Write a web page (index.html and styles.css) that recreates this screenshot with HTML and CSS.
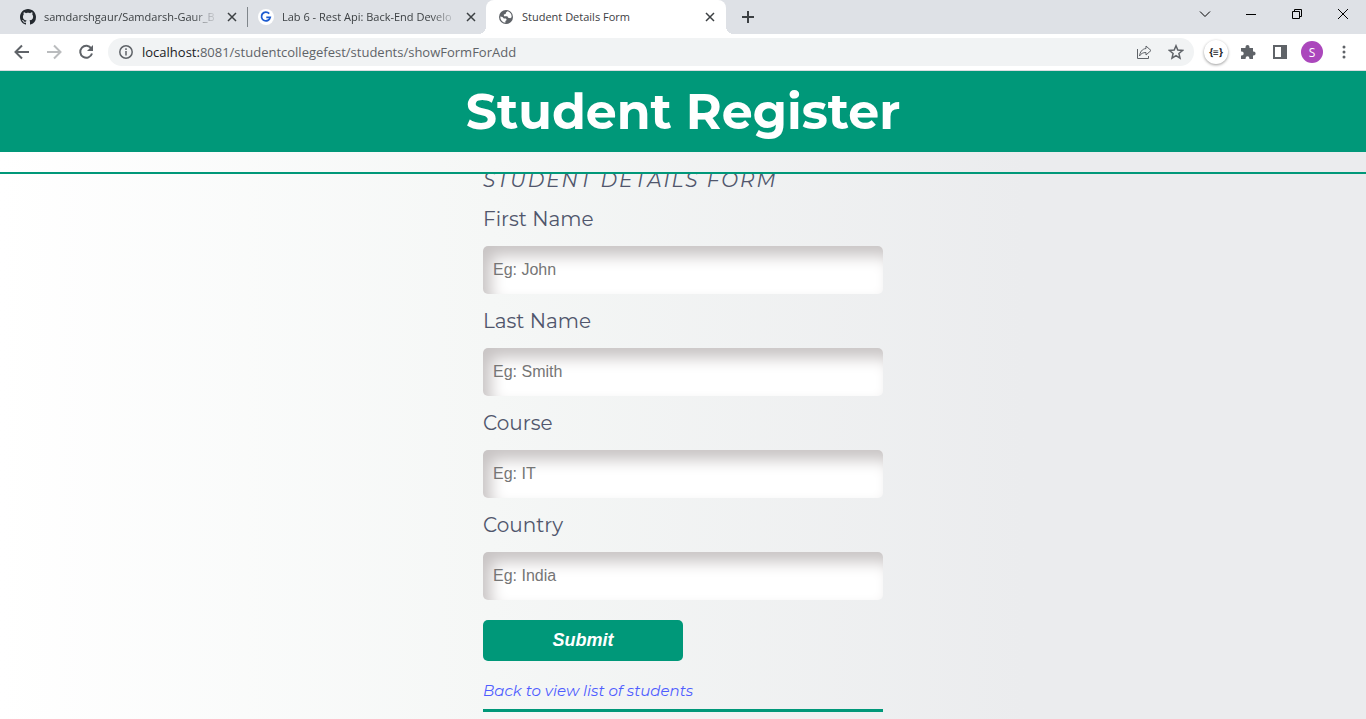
FILE: index.html
```html
<!DOCTYPE html>
<html lang="en">
<head>
<meta charset="utf-8">
<title>Student Details Form</title>
<link rel="stylesheet" href="styles.css">
</head>
<body>
<div class="browser">
  <div class="tabstrip">
    <div class="tab">
      <svg class="favicon" viewBox="0 0 16 16"><path fill="#24292f" d="M8 0C3.58 0 0 3.58 0 8c0 3.54 2.29 6.53 5.47 7.59.4.07.55-.17.55-.38 0-.19-.01-.82-.01-1.49-2.01.37-2.53-.49-2.69-.94-.09-.23-.48-.94-.82-1.13-.28-.15-.68-.52-.01-.53.63-.01 1.08.58 1.23.82.72 1.21 1.87.87 2.33.66.07-.52.28-.87.51-1.07-1.78-.2-3.64-.89-3.64-3.95 0-.87.31-1.59.82-2.15-.08-.2-.36-1.02.08-2.12 0 0 .67-.21 2.2.82.64-.18 1.32-.27 2-.27s1.36.09 2 .27c1.53-1.04 2.2-.82 2.2-.82.44 1.1.16 1.92.08 2.12.51.56.82 1.27.82 2.15 0 3.07-1.87 3.75-3.65 3.95.29.25.54.73.54 1.48 0 1.07-.01 1.93-.01 2.2 0 .21.15.46.55.38A8.01 8.01 0 0 0 16 8c0-4.42-3.58-8-8-8z"/></svg>
      <span class="tab-title fade">samdarshgaur/Samdarsh-Gaur_B</span>
      <button class="tab-close" aria-label="Close tab"><svg viewBox="0 0 10 10"><path d="M1 1l8 8M9 1l-8 8"/></svg></button>
    </div>
    <div class="tab divided">
      <svg class="favicon" viewBox="0 0 16 16"><circle cx="8" cy="8" r="8" fill="#fff"/><path d="M11.2 4.6A4.4 4.4 0 1 0 12.2 8.400H8.300" fill="none" stroke="#1d5bd0" stroke-width="1.800"/></svg>
      <span class="tab-title fade">Lab 6 - Rest Api: Back-End Develo</span>
      <button class="tab-close" aria-label="Close tab"><svg viewBox="0 0 10 10"><path d="M1 1l8 8M9 1l-8 8"/></svg></button>
    </div>
    <div class="tab active">
      <svg class="favicon" viewBox="0 0 16 16"><circle cx="8" cy="8" r="7" fill="#5f6368"/><path fill="#fff" d="M9.500 2.300L8 3.500 7.600 5 5.800 5.600 6 7.200H9.300l.9 1.600 2.100.4 1.300-1A5.700 5.700 0 0 0 9.500 2.300zM2.300 7.600A5.700 5.700 0 0 0 7.400 13.700V12l1.300-.9L8 9.600 5.800 9.400 4.500 8z"/></svg>
      <span class="tab-title">Student Details Form</span>
      <button class="tab-close" aria-label="Close tab"><svg viewBox="0 0 10 10"><path d="M1 1l8 8M9 1l-8 8"/></svg></button>
    </div>
    <button class="new-tab" aria-label="New tab"><svg viewBox="0 0 12 12"><path d="M6 0v12M0 6h12"/></svg></button>
    <div class="window-controls">
      <button aria-label="Search tabs"><svg viewBox="0 0 12 12"><path d="M1 3.500l5 5 5-5"/></svg></button>
      <button aria-label="Minimize"><svg viewBox="0 0 12 12"><path d="M1 6.500h10"/></svg></button>
      <button aria-label="Restore"><svg viewBox="0 0 12 12"><path d="M1.500 3.500h7v7h-7zM3.500 3.500v-2h7v7h-2"/></svg></button>
      <button aria-label="Close window"><svg viewBox="0 0 12 12"><path d="M1 1l10 10M11 1L1 11"/></svg></button>
    </div>
  </div>
  <div class="toolbar">
    <button class="tool" aria-label="Back"><svg viewBox="0 0 16 16"><path d="M15 8H2M8 1.500L1.500 8 8 14.500"/></svg></button>
    <button class="tool disabled" aria-label="Forward"><svg viewBox="0 0 16 16"><path d="M1 8h13M8 1.500L14.500 8 8 14.500"/></svg></button>
    <button class="tool" aria-label="Reload"><svg viewBox="0 0 16 16"><path d="M13.300 4.500A6 6 0 1 0 14 9.500"/><path class="solid" d="M15 1v6H9z"/></svg></button>
    <div class="omnibox">
      <svg class="glyph" viewBox="0 0 16 16"><circle cx="8" cy="8" r="6.200"/><path d="M8 7v4.500M8 4.300v1.700"/></svg>
      <div class="url"><span class="host">localhost:</span>8081/studentcollegefest/students/showFormForAdd</div>
      <button class="tool thin" aria-label="Share"><svg viewBox="0 0 16 16"><path d="M1.500 5v9.500h11V12M10 2l5 4.500-5 4.500V8.500C7 8.500 5 9.500 3.500 12 4 8 6 5 10 4.500z"/></svg></button>
      <button class="tool" aria-label="Bookmark"><svg viewBox="0 0 16 16"><path class="star" d="M8 1.800l1.800 4.300 4.700.4-3.600 3 1.100 4.700-4-2.500-4 2.500 1.100-4.700-3.600-3 4.700-.4z"/></svg></button>
    </div>
    <button class="extension" aria-label="JSON viewer">{≡}</button>
    <button class="tool" aria-label="Extensions"><svg viewBox="0 0 16 16"><path class="solid" d="M2 4h3.500V3a2 2 0 0 1 4 0v1H13v3.500h.6a2 2 0 0 1 0 4H13V15H9.400v-.8a1.900 1.900 0 0 0-3.800 0v.8H1v-3.600h.8a1.900 1.900 0 0 0 0-3.800H1V4z"/></svg></button>
    <button class="tool" aria-label="Side panel"><svg viewBox="0 0 16 16"><path class="solid" fill-rule="evenodd" d="M1 1h14v14H1zM3 3v10h6V3z"/></svg></button>
    <button class="avatar" aria-label="Profile">S</button>
    <button class="tool" aria-label="Menu"><svg viewBox="0 0 16 16"><g class="solid"><circle cx="8" cy="3" r="1.500"/><circle cx="8" cy="8" r="1.500"/><circle cx="8" cy="13" r="1.500"/></g></svg></button>
  </div>
</div>
<div class="page">
  <header class="banner"><h1>Student Register</h1></header>
  <hr class="rule">
  <main class="content">
    <h2 class="form-title">Student Details Form</h2>
    <form class="form">
      <label for="first">First Name</label>
      <input id="first" type="text" placeholder="Eg: John">
      <label for="last">Last Name</label>
      <input id="last" type="text" placeholder="Eg: Smith">
      <label for="course">Course</label>
      <input id="course" type="text" placeholder="Eg: IT">
      <label for="country">Country</label>
      <input id="country" type="text" placeholder="Eg: India">
      <button class="submit" type="button">Submit</button>
    </form>
    <a class="back" href="#">Back to view list of students</a>
  </main>
</div>
</body>
</html>
```
FILE: styles.css
```css
* { box-sizing: border-box; }
body {
  margin: 0;
  min-height: 100vh;
  display: flex;
  flex-direction: column;
  font-family: Montserrat, Inter, sans-serif;
  color: #50566c;
}
button { border: 0; padding: 0; background: none; font: inherit; color: inherit; }
svg { display: block; fill: none; stroke: currentColor; }

.browser { font-family: "Segoe UI", "Open Sans", sans-serif; color: #3c4043; }
.tabstrip { display: flex; height: 34px; background: #dee1e6; padding-left: 10px; }
.tab { display: flex; align-items: center; width: 239px; padding: 0 11px 0 10px; gap: 8px; font-size: 11px; }
.tab.divided { position: relative; width: 238px; padding: 0 10px 0 9px; }
.tab.divided::before { content: ""; position: absolute; left: -2px; top: 7px; width: 1px; height: 20px; background: #80868b; }
.tab.active { position: relative; width: 240px; padding: 0 10px 0 12px; margin-left: -1px; background: #fff; border-radius: 8px 8px 0 0; }
.tab.active::before, .tab.active::after { content: ""; position: absolute; bottom: 0; width: 8px; height: 8px; }
.tab.active::before { left: -8px; background: radial-gradient(circle at 0 0, transparent 8px, #fff 8px); }
.tab.active::after { right: -8px; background: radial-gradient(circle at 100% 0, transparent 8px, #fff 8px); }
.favicon { width: 16px; height: 16px; flex: none; stroke: none; }
.tab-title { flex: 1; padding-bottom: 2px; white-space: nowrap; }
.fade { mask-image: linear-gradient(to right, #000 85%, transparent); }
.tab-close { width: 12px; height: 12px; flex: none; }
.tab-close svg { width: 10px; height: 10px; margin: 1px; stroke-width: 1.5px; }
.new-tab { margin-left: 16px; }
.new-tab svg { width: 12px; height: 12px; stroke-width: 2; }
.window-controls { display: flex; margin-left: auto; color: #000; padding-bottom: 6px; }
.window-controls button { width: 46px; display: flex; align-items: center; justify-content: center; }
.window-controls svg { width: 12px; height: 12px; stroke-width: 1; }

.toolbar { display: flex; align-items: center; gap: 16px; height: 37px; padding: 0 14px; background: #fff; border-bottom: 1px solid #dadce0; color: #5f6368; }
.tool { flex: none; }
.tool svg, .glyph { width: 16px; height: 16px; flex: none; stroke-width: 2; }
.glyph { stroke-width: 1.5px; }
.thin svg { stroke-width: 1; }
.disabled { color: #babcbe; }
.solid { fill: currentColor; stroke: none; }
.star { stroke-width: 1.5px; }
.omnibox { flex: 1; display: flex; align-items: center; gap: 16px; height: 28px; margin-right: -6px; margin-left: -2px; padding: 0 10px; border-radius: 14px; background: #f1f3f4; }
.omnibox .url { flex: 1; margin-left: -8px; font-size: 13px; white-space: nowrap; }
.host { color: #202124; }
.extension { width: 24px; height: 24px; border-radius: 12px; margin-right: -4px; box-shadow: 0 1px 3px #0006; font-size: 10px; font-weight: 700; color: #202124; }
.avatar { width: 22px; height: 22px; border-radius: 11px; margin: 0 -3px; background: #ab47bc; color: #fff; font-size: 12px; }

.page { flex: 1; background: linear-gradient(90deg, #fff, #f5f7f6 36%, #ebecee 75%); }
.banner { background: #009879; color: #fff; text-align: center; }
.banner h1 { margin: 0; padding: 8px 0; font-size: 49px; line-height: 65px; font-weight: 700; }
.rule { position: relative; height: 2px; margin: 20px 0 0; border: 0; background: #009879; }
.content { width: 400px; max-width: 100%; margin: 0 auto; border-bottom: 3px solid #009879; }
.form-title { margin: 0; font-size: 20px; line-height: 12px; font-weight: 400; font-style: italic; letter-spacing: 2px; text-transform: uppercase; }
.form { display: flex; flex-direction: column; padding-top: 6px; }
.form label { margin-top: 14px; font-size: 20px; line-height: 26px; }
.form input { height: 48px; margin: 14px 0 0; padding: 0 10px; border: 0; border-radius: 5px; background: #fff; box-shadow: inset 8px 10px 15px #c8c4c4; font: 16px "Liberation Sans", Arial, sans-serif; }
.form input::placeholder { color: #757575; }
.submit { width: 200px; height: 41px; margin-top: 20px; border-radius: 5px; background: #009879; color: #fff; font: italic bold 18px "Liberation Sans", Arial, sans-serif; }
.back { display: block; padding: 20px 0 8px; font-size: 15px; line-height: 20px; font-style: italic; font-weight: 400; color: #4f5dff; text-decoration: none; }
```
